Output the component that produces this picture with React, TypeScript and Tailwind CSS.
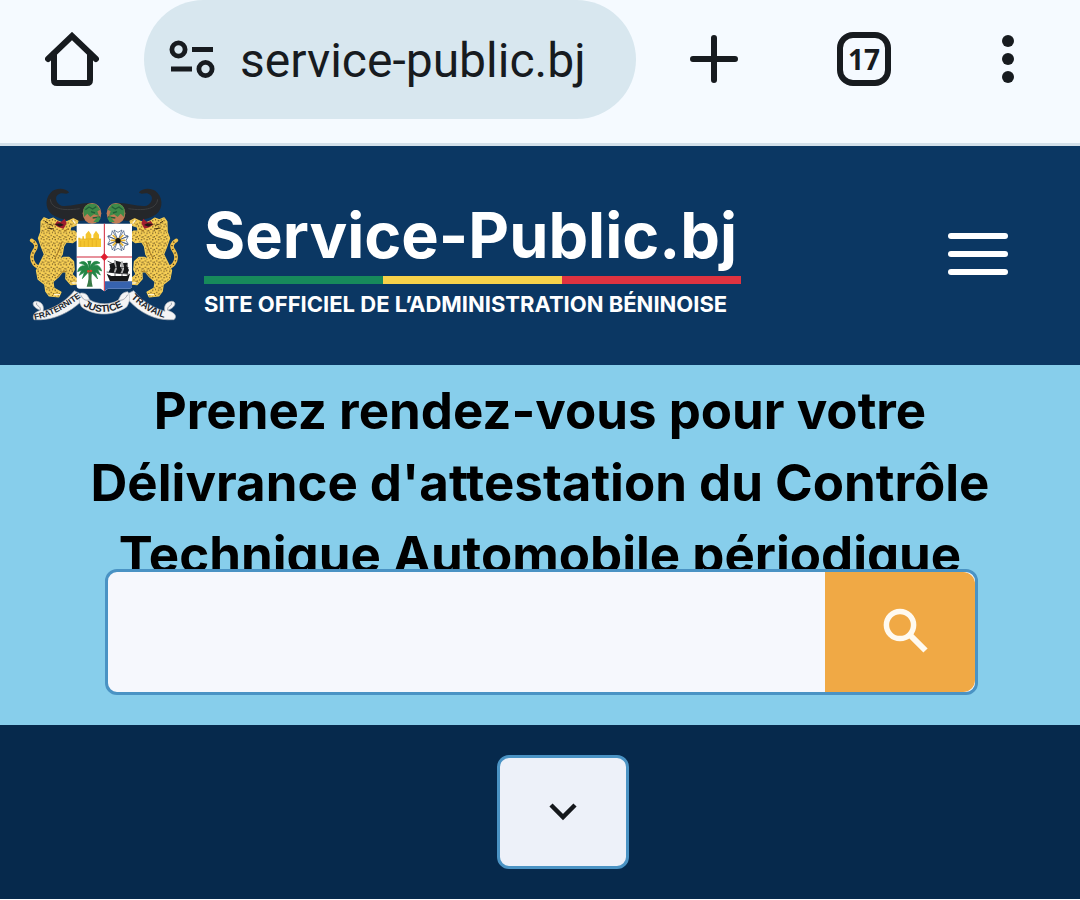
import { useState } from "react";

export default function App() {
  return (
    <div className="bg-white font-['Inter','Liberation_Sans',sans-serif]">
      <BrowserBar />
      <SiteHeader />
      <main>
        <Hero />
        <section className="flex justify-center bg-[#06294c] pt-[30px] pb-[30px] pl-[46px]">
          <button
            type="button"
            aria-label="Afficher la suite"
            className="flex h-[114px] w-[132px] items-center justify-center rounded-xl border-3 border-[#4a93c4] bg-[#edf1f9]"
          >
            <svg width="28" height="20" viewBox="0 0 28 20" fill="none" stroke="#15181c" strokeWidth="4.5">
              <path d="M2 3 14 15 26 3" />
            </svg>
          </button>
        </section>
      </main>
    </div>
  );
}

function BrowserBar() {
  return (
    <div className="flex h-[146px] items-start border-b-3 border-[#d3e0ea] bg-[#f5faff] text-[#171b1f]">
      <button type="button" aria-label="Accueil" className="flex h-[118px] w-36 items-center justify-center">
        <svg width="54" height="54" viewBox="0 0 54 54" fill="none" stroke="currentColor" strokeWidth="6" strokeLinecap="round">
          <path d="M3 27 27 4 51 27" />
          <path d="M9 22V48Q9 51 12 51H42Q45 51 45 48V22" />
        </svg>
      </button>
      <div className="mr-3 flex h-[119px] flex-1 items-center gap-6 rounded-full bg-[#d8e7ef] pl-6">
        <svg width="48" height="42" viewBox="0 0 48 42" fill="none" stroke="currentColor" strokeWidth="4.8">
          <circle cx="10.5" cy="10.5" r="6.6" />
          <path d="M24 10.5H45M3 30H24" />
          <circle cx="37.5" cy="30" r="6.6" />
        </svg>
        <span className="pt-0.5 font-[Roboto,sans-serif] text-[48px] leading-[56px]">service-public.bj</span>
      </div>
      <button type="button" aria-label="Nouvel onglet" className="flex h-[118px] w-36 items-center justify-center pr-3">
        <svg width="48" height="48" viewBox="0 0 48 48" stroke="currentColor" strokeWidth="6" strokeLinecap="round">
          <path d="M24 3V45M3 24H45" />
        </svg>
      </button>
      <button type="button" aria-label="Onglets ouverts" className="flex h-[118px] w-36 items-center justify-center">
        <span className="flex size-[54px] items-center justify-center rounded-2xl border-6 border-current font-['Open_Sans',sans-serif] text-[28px] leading-none font-bold">
          17
        </span>
      </button>
      <button type="button" aria-label="Menu du navigateur" className="flex h-[118px] w-36 items-center justify-center">
        <svg width="12" height="48" viewBox="0 0 12 48" fill="currentColor">
          <circle cx="6" cy="6" r="6" />
          <circle cx="6" cy="24" r="6" />
          <circle cx="6" cy="42" r="6" />
        </svg>
      </button>
    </div>
  );
}

function SiteHeader() {
  return (
    <header className="flex h-[219px] items-center justify-between bg-[#0b3763] pr-[72px] pl-5">
      <a href="#" className="flex items-center gap-[14px] text-white">
        <CoatOfArms />
        <span className="flex w-[537px] flex-col pt-[10px]">
          <span className="text-[63px] leading-[66px] font-bold whitespace-nowrap">Service-Public.bj</span>
          <span className="mt-2 flex h-2">
            <span className="flex-1 bg-[#178a5b]" />
            <span className="flex-1 bg-[#f8d24a]" />
            <span className="flex-1 bg-[#df3340]" />
          </span>
          <span className="mt-1 text-[22px] leading-8 font-bold whitespace-nowrap">
            SITE OFFICIEL DE L’ADMINISTRATION BÉNINOISE
          </span>
        </span>
      </a>
      <button type="button" aria-label="Menu" className="flex w-[60px] flex-col gap-3 pb-1">
        <span className="h-[6px] rounded-full bg-white" />
        <span className="h-[6px] rounded-full bg-white" />
        <span className="h-[6px] rounded-full bg-white" />
      </button>
    </header>
  );
}

function Hero() {
  const [query, setQuery] = useState("");

  return (
    <section className="bg-[#87ceeb] px-[60px] pt-[10px] pb-[30px]">
      <h1 className="text-center text-[51px] leading-[72px] font-bold text-black">
        Prenez rendez-vous pour votre
        <br />
        Délivrance d'attestation du Contrôle
        <br />
        Technique Automobile périodique
      </h1>
      <form
        onSubmit={(e) => e.preventDefault()}
        className="relative z-10 mr-[42px] -mt-[22px] ml-[45px] flex h-[126px] overflow-hidden rounded-xl border-3 border-[#4a93c4] bg-[#f6f8fd]"
      >
        <input
          type="text"
          aria-label="Rechercher"
          value={query}
          onChange={(e) => setQuery(e.target.value)}
          className="min-w-0 flex-1 bg-transparent px-6 text-[40px] outline-none"
        />
        <button
          type="submit"
          aria-label="Lancer la recherche"
          className="flex w-[150px] items-center justify-center rounded-r-xl bg-[#f0a945] pb-0.5 pl-3"
        >
          <svg width="46" height="46" viewBox="0 0 46 46" fill="none" stroke="#fffaf0" strokeWidth="5.5">
            <circle cx="17" cy="17" r="13.6" />
            <path d="M27 27 42.5 42.5" strokeWidth="6" />
          </svg>
        </button>
      </form>
    </section>
  );
}

const leopardBody =
  "M64 122 72 111 86 117 100 112 113 121 128 127 145 121 160 114 173 121 169 132 151 138 149 151 163 151 172 160 170 176 158 184 139 182 130 196 126 220 116 236 130 230 147 230 160 242 162 266 155 280 172 296 170 309 153 310 138 293 139 271 127 272 115 287 98 302 101 322 122 334 116 347 88 344 78 331 75 310 55 294 50 269 62 244 74 220 65 198 56 172 63 153Z";

function Leopard() {
  return (
    <>
      {/* tail */}
      <path d="M66 262C35 255 30 228 42 210C54 195 46 184 35 178" fill="none" stroke="#f0c04a" strokeWidth="11" strokeLinecap="round" />
      <path d="M66 262C35 255 30 228 42 210C54 195 46 184 35 178" fill="none" stroke="#2b2210" strokeWidth="4" strokeDasharray="3 9" />
      <path d={leopardBody} fill="#f7cf55" stroke="#f7cf55" strokeWidth="5" strokeLinejoin="round" />
      <path d={leopardBody} fill="url(#spots)" />
      <path d="M112 120 122 124 134 113 140 126 131 143 116 139 104 131Z" fill="#a01e30" />
      <path d="M104 129 122 127 132 132 119 137Z" fill="#231a16" />
      <path d="M75 121 84 126M88 130 98 133M82 141 102 144" stroke="#3b2a10" strokeWidth="3" />
      <path d="M126 182C118 205 112 222 104 233M138 272C126 268 122 280 110 290M146 142 132 151" fill="none" stroke="#a87820" strokeWidth="3" />
      <path d="M102 341H120M155 306H171M158 117 166 128" stroke="#fff3cf" strokeWidth="4" />
    </>
  );
}

function Horn() {
  return (
    <>
      <path fill="#25272a" d="M147 34C137 21 107 19 92 35C72 56 76 92 105 106C130 118 164 123 198 118L216 67C187 62 155 78 124 74C106 66 102 43 119 38C131 34 141 43 147 34Z" />
      <path d="M91 55C94 82 125 91 179 83" fill="none" stroke="#3c3e40" strokeWidth="3" />
      <ellipse cx="216" cy="97" rx="28" ry="31" fill="#c17b54" />
      <path fill="#3f8a48" d="M190 90C192 70 209 65 228 70L241 86 232 91 237 105 222 100 211 108 202 98 192 108Z" />
      <path d="M196 86 207 78 218 84 229 77M213 92 225 96M218 111 240 108" fill="none" stroke="#225f38" strokeWidth="4" />
      <path d="M220 123 233 107 242 112 235 124Z" fill="#40914a" />
    </>
  );
}

function CoatOfArms() {
  return (
    <svg width="170" height="150" viewBox="0 0 510 450" role="img" aria-label="Armoiries du Bénin" className="shrink-0">
      <defs>
        <pattern id="spots" width="17" height="19" patternUnits="userSpaceOnUse">
          <path d="M2 3h3v4H2zM11 1h3v3h-3zM7 10h4v3H7zM14 14h3v3h-3zM1 15h3v3H1z" fill="#4a3716" />
        </pattern>
        <path id="ribbon-left" d="M44 416C92 407 130 387 186 346" />
        <path id="ribbon-middle" d="M186 372C225 401 275 401 325 366" />
        <path id="ribbon-right" d="M333 350C365 381 398 402 446 414" />
      </defs>

      <Horn />
      <Leopard />
      <g transform="translate(504 0) scale(-1 1)">
        <Horn />
        <Leopard />
      </g>

      {/* shield */}
      <path d="M170 128H336V317Q334 323 326 323H264L253 331 242 323H179Q170 323 170 314Z" fill="#fff" />
      <path d="M253 128V330M170 228H336" stroke="#cf2438" strokeWidth="3" />
      <path d="M253 217 263 228 253 239 243 228Z" fill="#e01f30" stroke="#e01f30" strokeWidth="2" />

      {/* castle */}
      <path d="M175 198V170H181V175H187V166H192V174H197V160L206 149 214 161V171H220V161L228 149 237 161V174H243V198Z" fill="#f4c52f" />
      <path d="M182 180V197M193 180V197M205 177V197M217 174V197M229 178V197M175 174H243" stroke="#e0ab20" strokeWidth="2" />

      {/* star of the order */}
      <path d="M294 178 282 147 294 154 306 147ZM294 178 282 209 294 202 306 209ZM294 178 263 166 270 178 263 190ZM294 178 325 166 318 178 325 190ZM294 178 264 165 274 162 277 149ZM294 178 324 165 314 162 311 149ZM294 178 264 191 274 194 277 207ZM294 178 324 191 314 194 311 207Z" fill="#fff" stroke="#304c73" strokeWidth="2" />
      <path d="M272 178H316M278 162 310 194M310 162 278 194" stroke="#eab630" strokeWidth="5" />
      <circle cx="294" cy="179" r="8" fill="#151515" />

      {/* palm tree */}
      <path d="M204 271 217 271C213 287 214 302 218 317H200C206 302 207 287 204 271Z" fill="#397a47" />
      <path d="M209 267C195 246 177 253 173 272L185 267 178 283 193 274 187 293 209 269ZM209 267C224 244 240 251 245 270L233 265 241 282 226 273 233 294 209 269ZM208 266C203 242 190 237 178 246L190 250 208 266 226 250 240 246C228 235 212 243 208 266Z" fill="#238645" stroke="#238645" strokeWidth="2" />
      <path d="M209 268 202 240 214 239Z" fill="#238645" />
      <circle cx="205" cy="271" r="4" fill="#d6462e" />
      <circle cx="213" cy="270" r="4" fill="#d6462e" />

      {/* ship */}
      <path d="M255 301H336V317Q334 323 326 323H264L255 329Z" fill="#3763ae" />
      <path d="M260 278 274 285H319L330 279 323 301H270Z" fill="#161719" />
      <path d="M268 249 282 245 286 258 281 276 266 274 271 262ZM287 239 303 243 300 255 306 266 301 278 286 277 290 263ZM309 246 322 245 320 255 327 267 322 278 308 277 312 261Z" fill="#161719" />
      <path d="M263 240 279 249M285 237V289M306 241V287M322 246V281M260 273 330 280M269 260H326" stroke="#161719" strokeWidth="2" />

      {/* ribbons */}
      <g fill="#f4f4f5" stroke="#b4b9c0" strokeWidth="2">
        <path d="M61 388C35 379 34 360 50 361 67 363 73 376 69 391 116 377 145 352 163 329L188 342 188 358C146 398 96 420 42 416 37 406 40 395 61 388Z" />
        <path d="M443 388C469 379 470 360 454 361 437 363 431 376 435 391 388 377 359 352 341 329L316 342 326 358C363 398 408 420 462 416 473 406 464 395 443 388Z" />
        <path d="M182 336C203 335 203 347 210 357 235 372 271 372 294 358 302 347 301 335 323 332 331 341 331 362 320 378 281 406 222 406 185 378 176 362 175 349 182 336Z" />
      </g>
      <path d="M183 343C189 356 195 359 209 357M323 341C315 355 307 359 294 358M50 365C47 378 62 372 61 387M454 365C457 378 442 372 443 387" fill="none" stroke="#9ea3ac" strokeWidth="3" />
      <g fill="#20252b" className="font-['Liberation_Sans',sans-serif] font-bold">
        <text className="text-[25px]">
          <textPath href="#ribbon-left">FRATERNITE</textPath>
        </text>
        <text className="text-[30px]">
          <textPath href="#ribbon-middle" startOffset="4">JUSTICE</textPath>
        </text>
        <text className="text-[28px]">
          <textPath href="#ribbon-right">TRAVAIL</textPath>
        </text>
      </g>
    </svg>
  );
}
